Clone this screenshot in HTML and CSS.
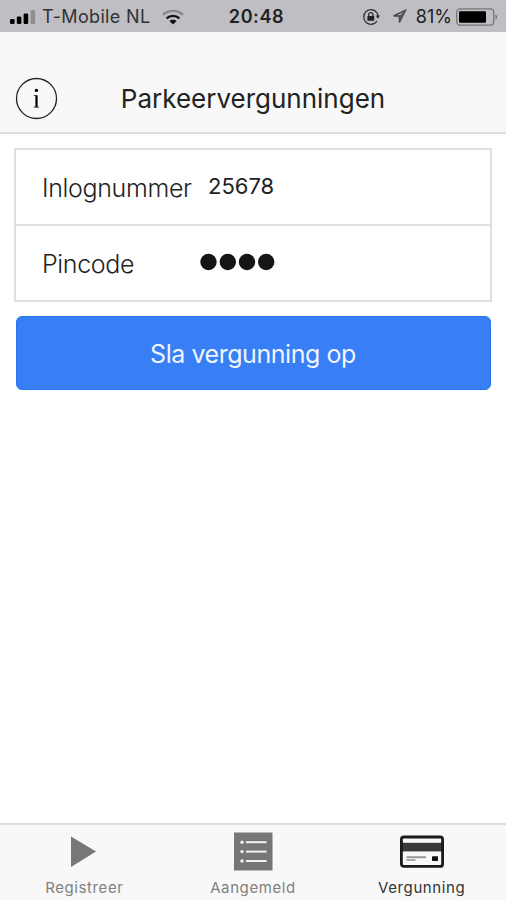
FILE: index.html
```html
<!DOCTYPE html>
<html lang="nl">

<head>
    <meta charset="UTF-8">
    <meta name="viewport" content="width=device-width, initial-scale=1.0">
    <title>Parkeervergunningen</title>
    <link rel="stylesheet" href="styles.css">
</head>

<body>
    <div class="status-bar">
        <div class="status-left">
            <svg class="signal" width="26" height="16" viewBox="0 0 26 16">
                <rect x="0" y="10" width="4.6" height="5" rx="1.2" />
                <rect x="6.8" y="7.5" width="4.6" height="7.5" rx="1.2" />
                <rect x="13.6" y="4.5" width="4.6" height="10.5" rx="1.2" />
                <rect x="20.6" y="1" width="4.6" height="14" rx="1.2" fill="#8e8e92" />
            </svg>
            <span class="carrier">T-Mobile NL</span>
            <svg class="wifi" width="22" height="16" viewBox="0 0 22 16" fill="none" stroke-width="2.4">
                <path d="M1 5.8C6.6.6 15.4.6 21 5.8" stroke="#88888c" />
                <path d="M4.6 9.3c3.6-3.3 9.2-3.3 12.8 0" stroke="#111" />
                <path d="M7.4 12c2-1.8 5.2-1.8 7.2 0L11 15.6z" fill="#111" />
            </svg>
        </div>
        <span class="clock">20:48</span>
        <div class="status-right">
            <svg class="lock" width="18" height="18" viewBox="0 0 18 18" fill="none" stroke="#333" stroke-width="1.3">
                <path d="M15 4.8A7.3 7.3 0 1 0 15 13.2" />
                <path d="M13.6 7.5h4.4l-2.2 3.2z" fill="#333" stroke="none" />
                <path d="M16 8.5A7.3 7.3 0 0 0 15 4.8" />
                <path d="M6.7 8.5V6.7a2.1 2.1 0 0 1 4.2 0v1.8" />
                <rect x="5.4" y="8" width="6.8" height="4.8" rx=".6" fill="#222" stroke="none" />
            </svg>
            <svg class="arrow" width="15" height="15" viewBox="0 0 15 15" fill="none" stroke="#444" stroke-width="1.4">
                <path d="M13.4 1.4L1.6 7h5.8v6.4z" />
                <path d="M13.4 1.4L7.4 7V13z" fill="#555" stroke="none" />
            </svg>
            <span class="percent">81%</span>
            <svg class="battery" width="42" height="18" viewBox="0 0 42 18">
                <rect x=".7" y=".9" width="37" height="16.2" rx="3.4" fill="none" stroke="#77777b" stroke-width="1.3" />
                <rect x="3" y="3.2" width="27" height="11.6" rx="1" />
                <path d="M39.4 6.4c2.4.8 2.4 4.4 0 5.2z" fill="#77777b" />
            </svg>
        </div>
    </div>

    <div class="header">
        <button class="btn-info" type="button" aria-label="Info">
            <svg width="43" height="43" viewBox="0 0 43 43">
                <circle cx="21.5" cy="21.5" r="20" fill="none" stroke="#222" stroke-width="1.3" />
                <circle cx="21.4" cy="13.4" r="1.7" />
                <path d="M18.8 18.2h3.8v11.6h1.4v.8h-5.2v-.8h1.6V19h-1.6z" />
            </svg>
        </button>
        <h1 class="title">Parkeervergunningen</h1>
    </div>

    <form class="content">
        <div class="list">
            <div class="item">
                <label for="txtNumber" class="label">Inlognummer</label>
                <input type="text" id="txtNumber" class="number" name="txtNumber" value="25678">
            </div>
            <div class="item">
                <span class="label">Pincode</span>
                <svg class="pin" width="76" height="18" viewBox="0 0 76 18" fill="#151515">
                    <circle cx="8.5" cy="9" r="8.2" />
                    <circle cx="27.8" cy="9" r="8.2" />
                    <circle cx="47" cy="9" r="8.2" />
                    <circle cx="66.2" cy="9" r="8.2" />
                </svg>
            </div>
        </div>
        <button class="btn-save" type="button">Sla vergunning op</button>
    </form>

    <div class="tabs">
        <a class="tab">
            <svg width="46" height="40" viewBox="0 0 46 40">
                <path d="M10 5.5L35 20.5 10 36z" fill="#777" />
            </svg>
            <span class="tab-text">Registreer</span>
        </a>
        <a class="tab">
            <svg width="46" height="40" viewBox="0 0 46 40">
                <rect x="4" y="1.5" width="38.5" height="38" fill="#777" />
                <g fill="#f4f4f4">
                    <circle cx="12" cy="11.2" r="1.7" />
                    <circle cx="12" cy="20.6" r="1.7" />
                    <circle cx="12" cy="30" r="1.7" />
                    <rect x="16" y="10.2" width="20.5" height="2" />
                    <rect x="16" y="19.6" width="20.5" height="2" />
                    <rect x="16" y="29" width="20.5" height="2" />
                </g>
            </svg>
            <span class="tab-text">Aangemeld</span>
        </a>
        <a class="tab active">
            <svg width="46" height="40" viewBox="0 0 46 40">
                <rect x="2.4" y="6" width="41.2" height="29.4" rx="2.5" fill="#f8f8f8" stroke="#1a1a1a" stroke-width="2.8" />
                <rect x="2" y="11.8" width="42" height="8.6" fill="#3a3a3a" />
                <path d="M2.4 11v10M43.6 11v10" stroke="#1a1a1a" stroke-width="2.8" />
                <rect x="7.5" y="25.2" width="19.5" height="2" fill="#999" />
                <rect x="7.5" y="28" width="9" height="2" fill="#aaa" />
                <rect x="33" y="25.2" width="6" height="4.8" rx=".8" fill="#111" />
            </svg>
            <span class="tab-text">Vergunning</span>
        </a>
    </div>
</body>

</html>
```
FILE: styles.css
```css
* {
    margin: 0;
    padding: 0;
    box-sizing: border-box;
}

body {
    display: flex;
    flex-direction: column;
    width: 100%;
    height: 100vh;
    overflow: hidden;
    background: #fff;
    color: #222;
    font-family: Inter, "Liberation Sans", sans-serif;
}

button {
    border: none;
    background: none;
    font-family: inherit;
}

/* Status bar */
.status-bar {
    display: grid;
    grid-template-columns: 1fr auto 1fr;
    align-items: center;
    height: 32px;
    padding: 1px 8px 0 10px;
    background: #bfbec3;
    font-size: 18px;
}

.status-left,
.status-right {
    display: flex;
    align-items: center;
}

.status-right {
    justify-content: flex-end;
}

.carrier {
    margin-left: 6px;
    color: #333;
    letter-spacing: 0.35px;
}

.wifi {
    margin-left: 11px;
}

.clock {
    margin-left: 5px;
    color: #222;
    font-weight: 600;
    letter-spacing: 0.6px;
}

.arrow {
    margin: 0 9px 0 12px;
}

.percent {
    margin-right: 4px;
}

/* Header */
.header {
    display: grid;
    grid-template-columns: 43px 1fr 43px;
    align-items: center;
    height: 102px;
    padding: 32px 15px 0;
    border-bottom: 2px solid #dcdcdc;
    background: #f8f8f8;
}

.btn-info {
    height: 43px;
}

.title {
    text-align: center;
    font-size: 26px;
    font-weight: 400;
}

/* Form */
.content {
    flex: 1;
    padding: 14px 14px 0;
}

.list {
    border: 2px solid #e0e0e0;
}

.item {
    display: flex;
    align-items: center;
    height: 74px;
    padding: 2px 0 0 26px;
}

.item + .item {
    height: 76px;
    border-top: 2px solid #e0e0e0;
}

.label {
    width: 150px;
    font-size: 25px;
    font-weight: 300;
    letter-spacing: -0.35px;
    white-space: nowrap;
}

.number {
    width: 200px;
    margin: -4px 0 0 16px;
    border: none;
    outline: none;
    color: #222;
    font-family: inherit;
    font-size: 22px;
}

.pin {
    margin: -4px 0 0 8px;
}

.btn-save {
    display: block;
    width: 475px;
    height: 74px;
    margin: 14px auto 0;
    padding-top: 2px;
    border: 1px solid #2674ee;
    border-radius: 6px;
    background: #387ef5;
    color: #eef5ff;
    font-size: 25px;
    letter-spacing: -0.45px;
}

/* Tabs */
.tabs {
    display: flex;
    height: 77px;
    border-top: 2px solid #dcdcdc;
    background: #f8f8f8;
}

.tab {
    display: flex;
    flex: 1;
    flex-direction: column;
    align-items: center;
    padding-top: 6px;
    color: #808080;
}

.tab-text {
    margin-top: 8px;
    font-size: 15px;
    line-height: 18px;
    letter-spacing: 0.6px;
}

.active {
    color: #333;
}
```
